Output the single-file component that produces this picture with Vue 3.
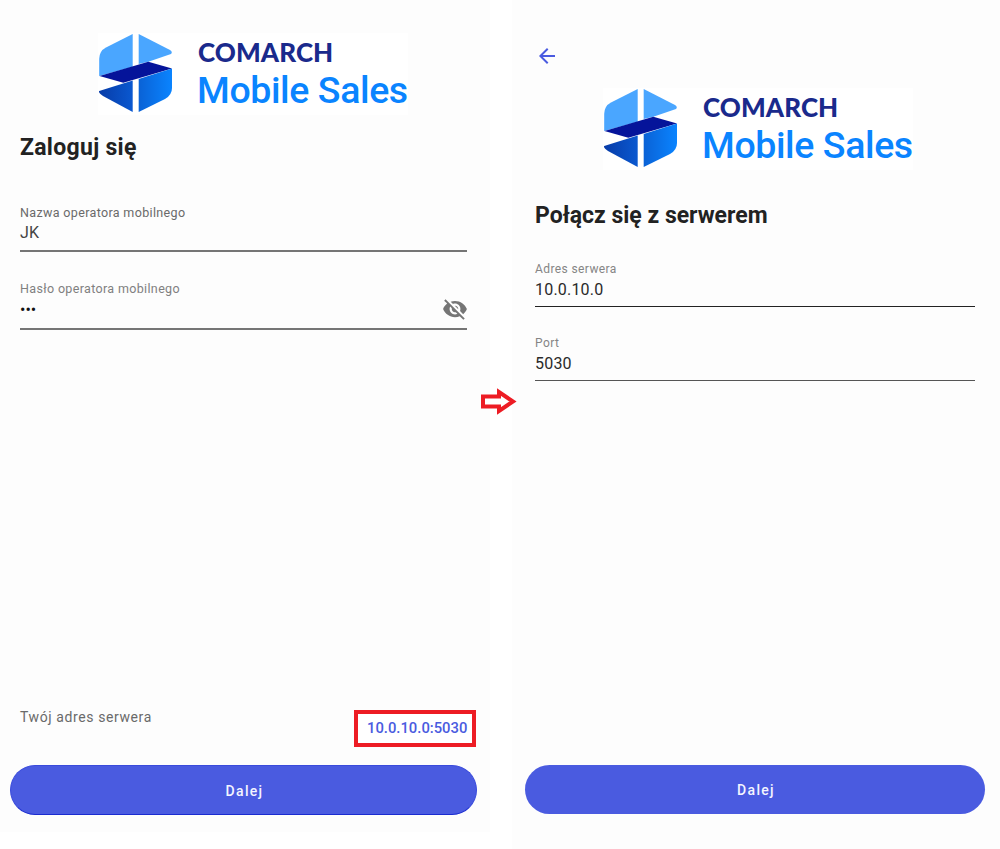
<script setup>
const gradientId = 'lgA'
</script>

<template>
  <div class="page">
    <section class="screen left">
      <div class="logo logo-left">
        <svg class="mark" width="74" height="80" viewBox="99 33 74 80">
          <defs>
            <linearGradient id="lgA" x1="0" x2="1" y1="0" y2="0">
              <stop offset="0" stop-color="#073ca8" />
              <stop offset="1" stop-color="#0a58d0" />
            </linearGradient>
            <linearGradient id="lgB" x1="0" x2="1" y1="0" y2="0">
              <stop offset="0" stop-color="#0a62d6" />
              <stop offset="1" stop-color="#0a84ff" />
            </linearGradient>
          </defs>
          <path d="M132.7 34 L106 47.5 Q99.2 51 99.2 59 L99.2 76 L132.7 66.8 Z" fill="#4aa6ff" />
          <path d="M138.7 34 L170 50 Q173 52 171 54 L148.3 61.7 L138.7 64 Z" fill="#4aa6ff" />
          <path d="M99.5 76 L148.3 61.7 L172 68.5 L123.3 82.8 Z" fill="#05149a" />
          <path d="M99.2 91 L132.7 80.5 L132.7 112 L103 96 Q98 92.5 99.2 91 Z" :fill="`url(#${gradientId})`" />
          <path d="M138.7 79 L172 68.5 L172 88 Q172 95 165 99 L138.7 112 Z" fill="url(#lgB)" />
        </svg>
        <div class="logo-text">
          <span class="brand">COMARCH</span>
          <span class="product">Mobile Sales</span>
        </div>
      </div>

      <h1 class="title title-left">Zaloguj się</h1>

      <div class="field field-login">
        <span class="label">Nazwa operatora mobilnego</span>
        <span class="value">JK</span>
      </div>
      <div class="field field-pass">
        <span class="label label-soft">Hasło operatora mobilnego</span>
        <div class="pass-row">
          <span class="dots">•••</span>
          <svg class="eye" width="26" height="26" viewBox="0 0 24 24" fill="#757575">
            <path d="M12 7c2.76 0 5 2.24 5 5 0 .65-.13 1.26-.36 1.83l2.92 2.92c1.51-1.26 2.7-2.89 3.43-4.75-1.73-4.39-6-7.5-11-7.5-1.4 0-2.74.25-3.98.7l2.16 2.16C10.74 7.13 11.35 7 12 7zM2 4.27l2.28 2.28.46.46C3.08 8.3 1.78 10.02 1 12c1.73 4.39 6 7.5 11 7.5 1.55 0 3.03-.3 4.38-.84l.42.42L19.73 22 21 20.73 3.27 3 2 4.27zM7.53 9.8l1.55 1.55c-.05.21-.08.43-.08.65 0 1.66 1.34 3 3 3 .22 0 .44-.03.65-.08l1.55 1.55c-.67.33-1.41.53-2.2.53-2.76 0-5-2.24-5-5 0-.79.2-1.53.53-2.2zm4.31-.78l3.15 3.15.02-.16c0-1.66-1.34-3-3-3l-.17.01z" />
          </svg>
        </div>
      </div>

      <div class="footer">
        <span class="server-label">Twój adres serwera</span>
        <span class="server-box">10.0.10.0:5030</span>
      </div>
      <button class="btn btn-left">Dalej</button>
    </section>

    <section class="screen right">
      <svg class="back" width="24" height="24" viewBox="0 0 24 24" fill="#4a5be0">
        <path d="M20 11H7.83l5.59-5.59L12 4l-8 8 8 8 1.41-1.41L7.83 13H20v-2z" />
      </svg>
      <div class="logo logo-right">
        <svg class="mark" width="74" height="80" viewBox="99 33 74 80">
          <path d="M132.7 34 L106 47.5 Q99.2 51 99.2 59 L99.2 76 L132.7 66.8 Z" fill="#4aa6ff" />
          <path d="M138.7 34 L170 50 Q173 52 171 54 L148.3 61.7 L138.7 64 Z" fill="#4aa6ff" />
          <path d="M99.5 76 L148.3 61.7 L172 68.5 L123.3 82.8 Z" fill="#05149a" />
          <path d="M99.2 91 L132.7 80.5 L132.7 112 L103 96 Q98 92.5 99.2 91 Z" fill="url(#lgA)" />
          <path d="M138.7 79 L172 68.5 L172 88 Q172 95 165 99 L138.7 112 Z" fill="url(#lgB)" />
        </svg>
        <div class="logo-text">
          <span class="brand">COMARCH</span>
          <span class="product">Mobile Sales</span>
        </div>
      </div>

      <h1 class="title title-right">Połącz się z serwerem</h1>

      <div class="rfield rfield-first">
        <span class="label light">Adres serwera</span>
        <span class="value dark">10.0.10.0</span>
      </div>
      <div class="rfield rfield-second">
        <span class="label light">Port</span>
        <span class="value dark">5030</span>
      </div>

      <button class="btn btn-right">Dalej</button>
    </section>

    <svg class="arrow" width="38" height="28" viewBox="0 0 38 28">
      <path d="M3 8.5 H19 V4 L33 13.5 L19 23 V18.5 H3 Z" fill="#fff" stroke="#ed1c24" stroke-width="4" />
    </svg>
  </div>
</template>

<style>
html, body { margin: 0; background: #fff; }
</style>

<style scoped>
.page {
  position: relative;
  width: 1000px;
  height: 849px;
  overflow: hidden;
  display: flex;
  justify-content: space-between;
  align-items: flex-start;
  font-family: Roboto, "Liberation Sans", sans-serif;
  background: #fff;
}
.screen {
  display: flex;
  flex-direction: column;
  background: #fdfdfd;
  box-sizing: border-box;
}
.left { width: 490px; height: 832px; padding: 33px 0 0 0; }
.right { width: 488px; height: 849px; padding: 44px 0 0 0; }

.logo {
  display: flex;
  align-items: flex-start;
  background: #fff;
  width: 310px;
  height: 82px;
}
.logo-left { margin-left: 98px; }
.logo-right { margin-left: 91px; margin-top: 20px; }
.mark { flex: none; margin-left: 1px; }
.logo-text {
  display: flex;
  flex-direction: column;
  margin-left: 25px;
}
.brand {
  font-family: Lato, Inter, sans-serif;
  font-weight: 900;
  font-size: 26px;
  line-height: 30px;
  margin-top: 4px;
  color: #1a2a8c;
  letter-spacing: 0.1px;
}
.product {
  font-size: 37.5px;
  font-weight: 500;
  line-height: 46px;
  color: #0a84ff;
  white-space: nowrap;
  letter-spacing: -0.4px;
  margin-left: -1px;
}

.title {
  margin: 0;
  font-size: 23px;
  font-weight: 700;
  color: #222;
  line-height: 26px;
}
.title-left { margin: 20px 0 0 20px; letter-spacing: 0.3px; }
.title-right { margin: 33px 0 0 23px; }

.label {
  display: block;
  font-size: 12.5px;
  line-height: 16px;
  color: #6a6a6a;
  letter-spacing: 0.35px;
}
.label-soft { color: #808080; }
.label.light { color: #858585; font-size: 12px; letter-spacing: 0.4px; }
.value {
  display: block;
  font-size: 16px;
  line-height: 20px;
  color: #444;
  margin-top: 2px;
  letter-spacing: 0.2px;
}
.value.dark { color: #2a2a2a; margin-top: 3px; }

.field {
  margin-left: 20px;
  width: 447px;
  box-sizing: border-box;
  border-bottom: 2px solid #757575;
}
.field-login { margin-top: 43px; height: 48px; padding-top: 1px; }
.field-pass { margin-top: 28px; height: 50px; padding-top: 1px; }
.pass-row {
  display: flex;
  justify-content: space-between;
  align-items: center;
  height: 26px;
  margin-top: -1px;
}
.dots { font-size: 16px; color: #111; }
.eye { margin-right: -1px; }

.footer {
  margin-top: auto;
  margin-left: 20px;
  width: 456px;
  display: flex;
  justify-content: space-between;
  align-items: flex-start;
}
.server-label {
  font-size: 14px;
  line-height: 16px;
  color: #6a6a6a;
  letter-spacing: 0.6px;
  margin-top: -8px;
}
.server-box {
  box-sizing: border-box;
  width: 122px;
  height: 37px;
  border: 4px solid #ed1c24;
  background: #fff;
  color: #4a5be0;
  font-size: 14.8px;
  font-weight: 500;
  line-height: 29px;
  padding-left: 9px;
  white-space: nowrap;
  margin-top: -7px;
}
.btn {
  display: block;
  box-sizing: border-box;
  border: none;
  background: #4a5be0;
  color: #f4f5ff;
  font-family: Roboto, sans-serif;
  font-weight: 500;
  font-size: 14px;
  letter-spacing: 1.3px;
  border-radius: 25px;
  padding: 0 0 0 2px;
}
.btn-left {
  margin: 18px 0 17px 10px;
  width: 467px;
  height: 50px;
  border: 1px solid #3a4bdc;
  border-bottom-color: #1a2bd0;
  padding-top: 2px;
}
.btn-right {
  margin: auto 0 35px 13px;
  width: 460px;
  height: 49px;
}

.back { margin-left: 23px; }

.rfield {
  margin-left: 23px;
  width: 440px;
  box-sizing: border-box;
  height: 46px;
  border-bottom: 1px solid #222;
}
.rfield-first { margin-top: 32px; }
.rfield-second { margin-top: 28px; border-bottom-color: #555; }

.arrow { position: absolute; left: 480px; top: 388px; }
</style>
